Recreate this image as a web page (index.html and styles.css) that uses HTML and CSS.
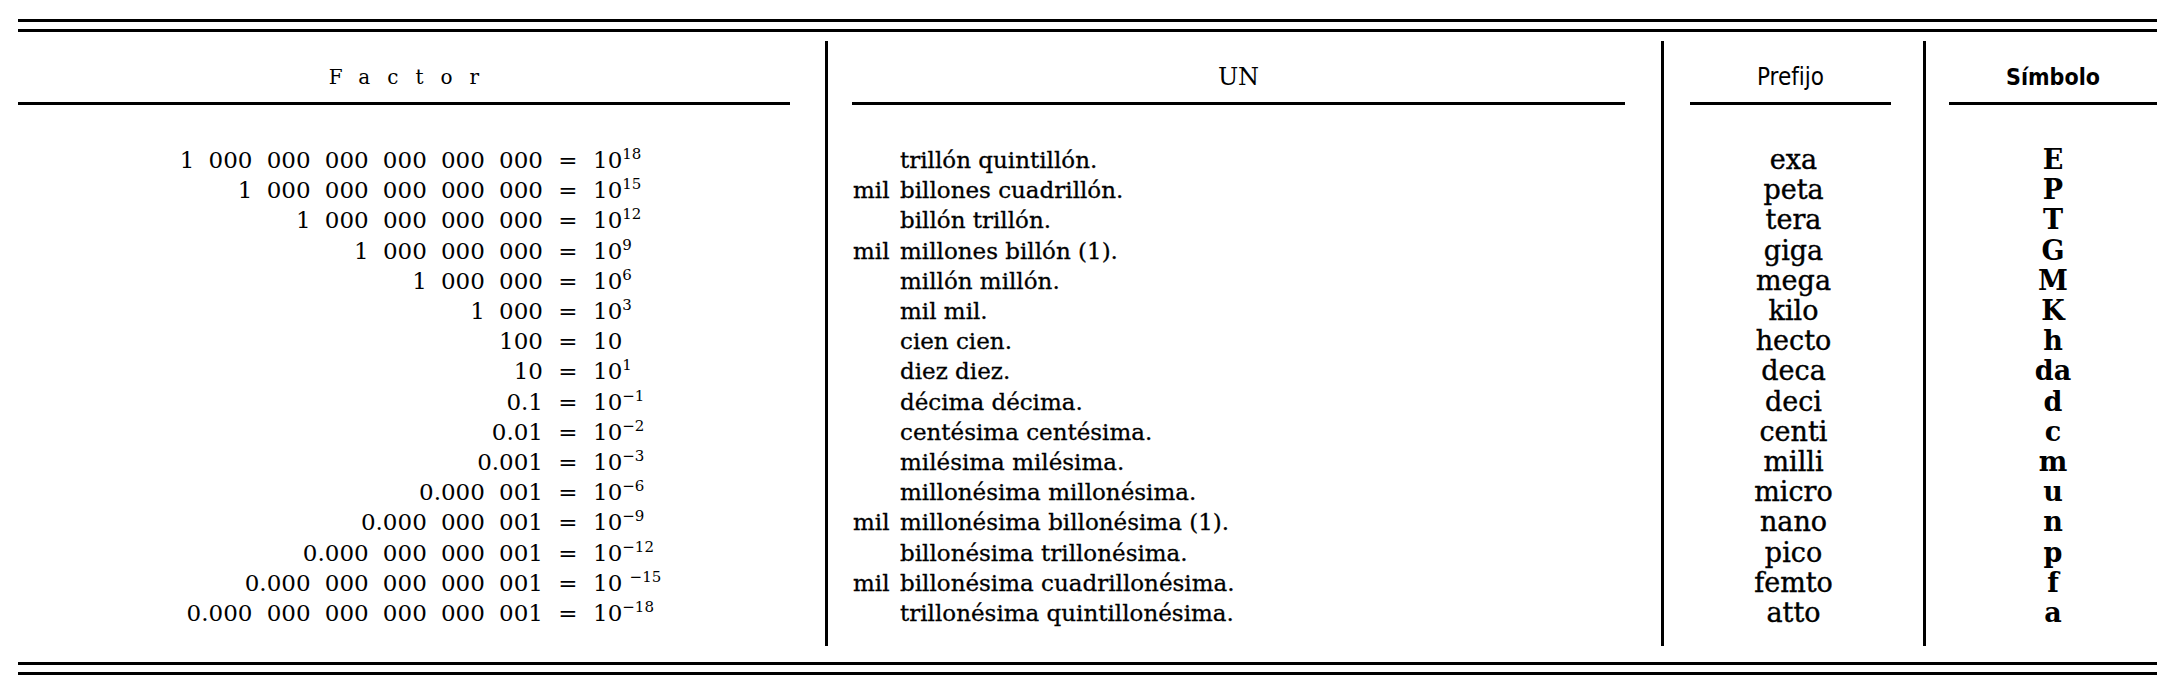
FILE: index.html
```html
<!DOCTYPE html>
<html lang="es">
<head>
<meta charset="utf-8">
<title>Prefijos SI</title>
<link rel="stylesheet" href="styles.css">
</head>
<body>
<div class="sheet">
  <div class="double-rule"></div>
  <div class="table">
    <div class="col col-factor">
      <div class="head"><span class="spaced">Factor</span></div>
      <div class="body">
        <div class="frow"><span class="num">1 000 000 000 000 000 000</span><span class="eq">=</span><span class="pow">10<sup>18</sup></span></div>
        <div class="frow"><span class="num">1 000 000 000 000 000</span><span class="eq">=</span><span class="pow">10<sup>15</sup></span></div>
        <div class="frow"><span class="num">1 000 000 000 000</span><span class="eq">=</span><span class="pow">10<sup>12</sup></span></div>
        <div class="frow"><span class="num">1 000 000 000</span><span class="eq">=</span><span class="pow">10<sup>9</sup></span></div>
        <div class="frow"><span class="num">1 000 000</span><span class="eq">=</span><span class="pow">10<sup>6</sup></span></div>
        <div class="frow"><span class="num">1 000</span><span class="eq">=</span><span class="pow">10<sup>3</sup></span></div>
        <div class="frow"><span class="num">100</span><span class="eq">=</span><span class="pow">10</span></div>
        <div class="frow"><span class="num">10</span><span class="eq">=</span><span class="pow">10<sup>1</sup></span></div>
        <div class="frow"><span class="num">0.1</span><span class="eq">=</span><span class="pow">10<sup>−1</sup></span></div>
        <div class="frow"><span class="num">0.01</span><span class="eq">=</span><span class="pow">10<sup>−2</sup></span></div>
        <div class="frow"><span class="num">0.001</span><span class="eq">=</span><span class="pow">10<sup>−3</sup></span></div>
        <div class="frow"><span class="num">0.000 001</span><span class="eq">=</span><span class="pow">10<sup>−6</sup></span></div>
        <div class="frow"><span class="num">0.000 000 001</span><span class="eq">=</span><span class="pow">10<sup>−9</sup></span></div>
        <div class="frow"><span class="num">0.000 000 000 001</span><span class="eq">=</span><span class="pow">10<sup>−12</sup></span></div>
        <div class="frow"><span class="num">0.000 000 000 000 001</span><span class="eq">=</span><span class="pow">10 <sup>−15</sup></span></div>
        <div class="frow"><span class="num">0.000 000 000 000 000 001</span><span class="eq">=</span><span class="pow">10<sup>−18</sup></span></div>
      </div>
    </div>
    <div class="col col-un">
      <div class="head">UN</div>
      <div class="body">
        <div class="urow"><span class="mil"></span><span>trillón quintillón.</span></div>
        <div class="urow"><span class="mil">mil</span><span>billones cuadrillón.</span></div>
        <div class="urow"><span class="mil"></span><span>billón trillón.</span></div>
        <div class="urow"><span class="mil">mil</span><span>millones billón (1).</span></div>
        <div class="urow"><span class="mil"></span><span>millón millón.</span></div>
        <div class="urow"><span class="mil"></span><span>mil mil.</span></div>
        <div class="urow"><span class="mil"></span><span>cien cien.</span></div>
        <div class="urow"><span class="mil"></span><span>diez diez.</span></div>
        <div class="urow"><span class="mil"></span><span>décima décima.</span></div>
        <div class="urow"><span class="mil"></span><span>centésima centésima.</span></div>
        <div class="urow"><span class="mil"></span><span>milésima milésima.</span></div>
        <div class="urow"><span class="mil"></span><span>millonésima millonésima.</span></div>
        <div class="urow"><span class="mil">mil</span><span>millonésima billonésima (1).</span></div>
        <div class="urow"><span class="mil"></span><span>billonésima trillonésima.</span></div>
        <div class="urow"><span class="mil">mil</span><span>billonésima cuadrillonésima.</span></div>
        <div class="urow"><span class="mil"></span><span>trillonésima quintillonésima.</span></div>
      </div>
    </div>
    <div class="col col-pre">
      <div class="head head-sans">Prefijo</div>
      <div class="body">
        <div>exa</div><div>peta</div><div>tera</div><div>giga</div>
        <div>mega</div><div>kilo</div><div>hecto</div><div>deca</div>
        <div>deci</div><div>centi</div><div>milli</div><div>micro</div>
        <div>nano</div><div>pico</div><div>femto</div><div>atto</div>
      </div>
    </div>
    <div class="col col-sym">
      <div class="head head-sans head-bold">Símbolo</div>
      <div class="body">
        <div>E</div><div>P</div><div>T</div><div>G</div>
        <div>M</div><div>K</div><div>h</div><div>da</div>
        <div>d</div><div>c</div><div>m</div><div>u</div>
        <div>n</div><div>p</div><div>f</div><div>a</div>
      </div>
    </div>
  </div>
  <div class="double-rule bottom"></div>
</div>
</body>
</html>
```

FILE: styles.css
```css
html, body {
  margin: 0;
  padding: 0;
  background: #ffffff;
  color: #000000;
}

body {
  font-family: "DejaVu Serif", "Liberation Serif", serif;
}

.sheet {
  width: 2139px;
  padding: 19px 7px 0 18px;
}

.double-rule {
  height: 7px;
  border-top: 3px solid #000;
  border-bottom: 3px solid #000;
}

.double-rule.bottom {
  margin-top: 16px;
}

.table {
  display: grid;
  grid-template-columns: 807px 836px 262px 1fr;
  margin-top: 9px;
}

.col {
  padding-bottom: 18px;
}

.col + .col {
  border-left: 3px solid #000;
}

.head {
  box-sizing: border-box;
  height: 64px;
  padding-top: 10px;
  display: flex;
  align-items: center;
  justify-content: center;
  border-bottom: 3px solid #000;
  font-size: 24px;
}

.col-factor .head { margin-right: 35px; }
.col-un .head { margin: 0 36px 0 24px; }
.col-pre .head { margin: 0 32px 0 26px; }
.col-sym .head { margin: 0 0 0 23px; }

.spaced {
  letter-spacing: 17px;
  padding-left: 17px;
  font-size: 20px;
}

.head-sans {
  font-family: "DejaVu Sans Condensed", "DejaVu Sans", sans-serif;
  font-stretch: condensed;
  font-size: 24px;
}

.head-bold {
  font-weight: bold;
  font-size: 23px;
}

.body {
  padding-top: 40px;
  line-height: 30.2px;
}

.frow {
  display: grid;
  grid-template-columns: 525px 50px auto;
  font-size: 23px;
}

.num {
  text-align: right;
  word-spacing: 0.3em;
  white-space: pre;
}

.eq {
  text-align: center;
}

.pow {
  text-align: left;
  white-space: pre;
}

sup {
  font-size: 15px;
  line-height: 0;
  vertical-align: 9px;
}

.col-un .body {
  padding-left: 25px;
  font-size: 23px;
  -webkit-text-stroke: 0.3px #000;
}

.urow {
  display: grid;
  grid-template-columns: 47px auto;
}

.col-pre .body {
  text-align: center;
  font-size: 27px;
  -webkit-text-stroke: 0.4px #000;
}

.col-sym .body {
  padding-left: 23px;
  text-align: center;
  font-size: 27px;
  font-weight: bold;
}
```
